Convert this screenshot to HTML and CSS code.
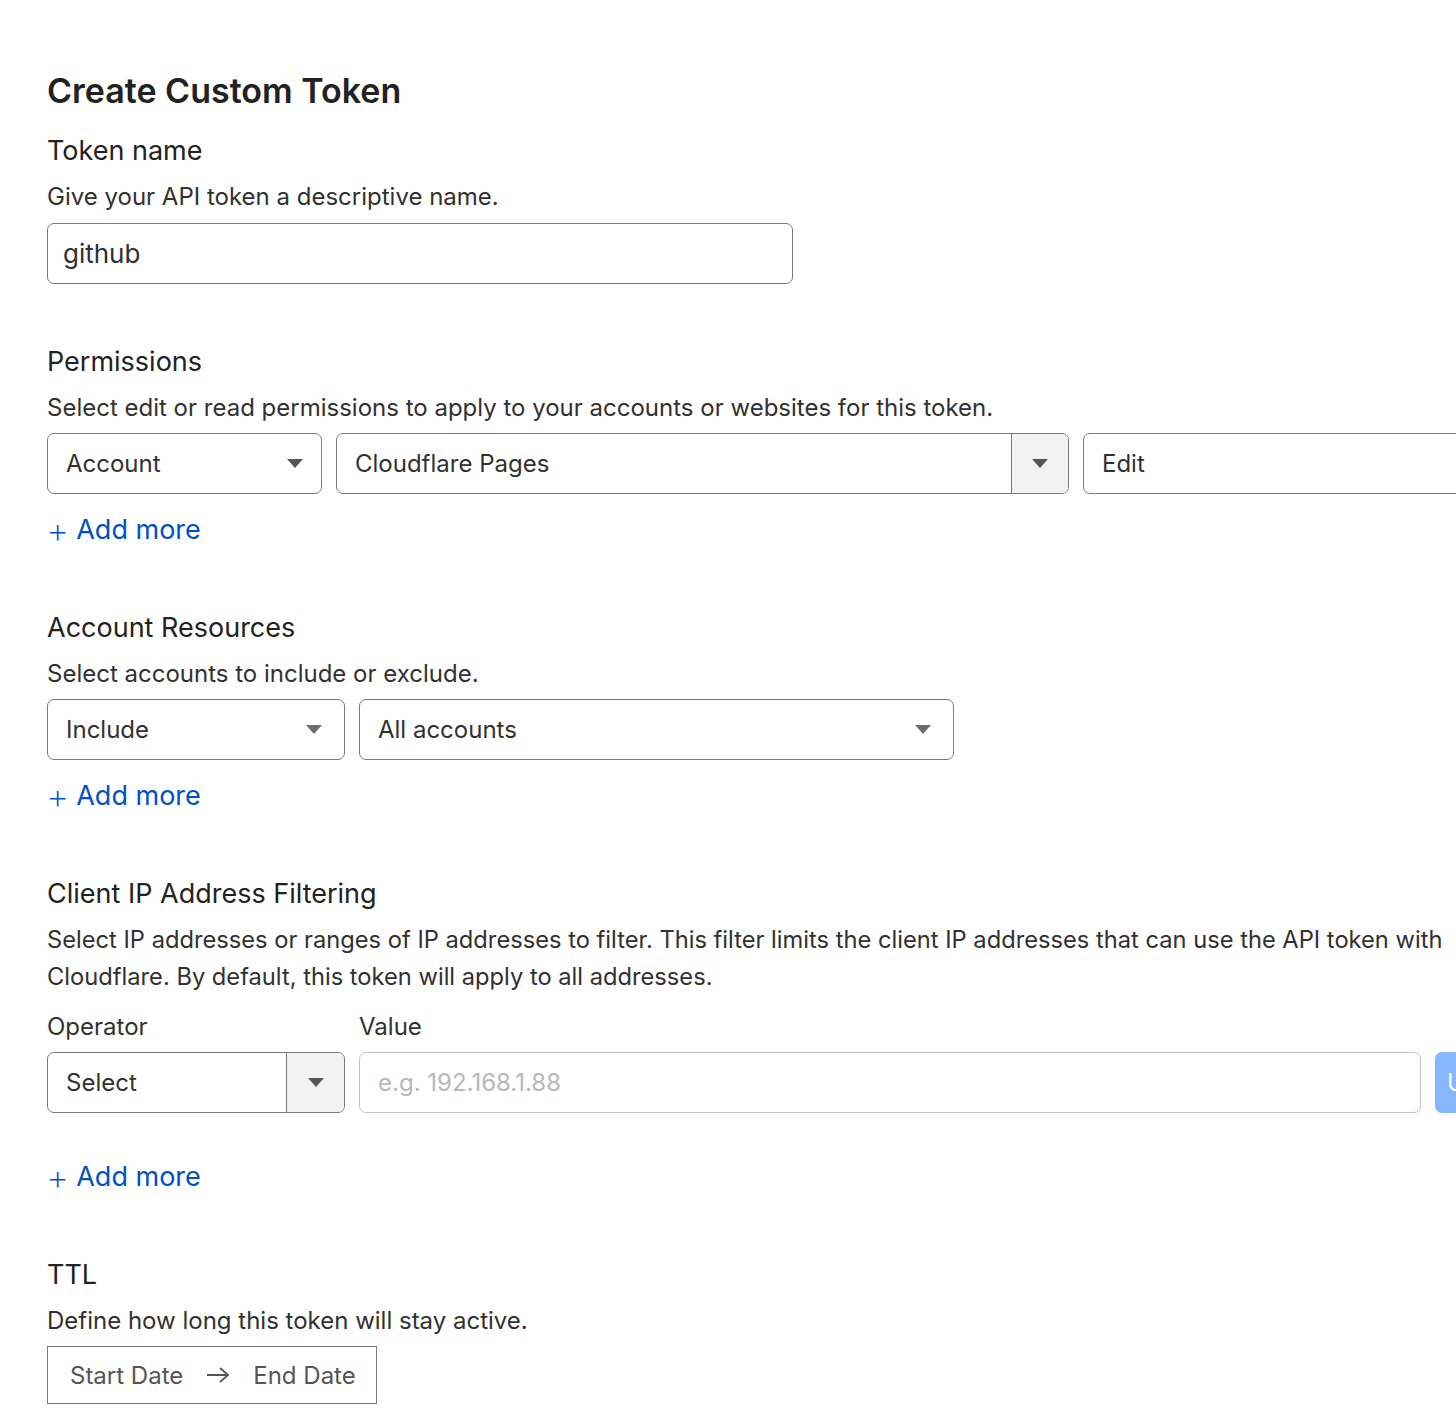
FILE: index.html
```html
<!DOCTYPE html>
<html lang="en">
<head>
  <meta charset="UTF-8">
  <meta name="viewport" content="width=device-width, initial-scale=1.0">
  <title>Create Custom Token</title>
  <link rel="stylesheet" href="styles.css">
</head>
<body>

<main class="token-form">
  <h1>Create Custom Token</h1>

  <section class="block first">
    <h2>Token name</h2>
    <p class="desc">Give your API token a descriptive name.</p>
    <div class="field name-field">github</div>
  </section>

  <section class="block">
    <h2>Permissions</h2>
    <p class="desc">Select edit or read permissions to apply to your accounts or websites for this token.</p>
    <div class="row perm-row">
      <div class="field select">Account <span class="caret"></span></div>
      <div class="field combo">
        <span class="combo-text">Cloudflare Pages</span>
        <span class="combo-btn"><span class="caret"></span></span>
      </div>
      <div class="field select">Edit</div>
    </div>
    <a class="add-more"><span class="plus">+</span> Add more</a>
  </section>

  <section class="block">
    <h2>Account Resources</h2>
    <p class="desc">Select accounts to include or exclude.</p>
    <div class="row res-row">
      <div class="field select">Include <span class="caret light"></span></div>
      <div class="field select">All accounts <span class="caret light"></span></div>
    </div>
    <a class="add-more"><span class="plus">+</span> Add more</a>
  </section>

  <section class="block">
    <h2>Client IP Address Filtering</h2>
    <p class="desc wide">Select IP addresses or ranges of IP addresses to filter. This filter limits the client IP addresses that can use the API token with Cloudflare. By default, this token will apply to all addresses.</p>
    <div class="row ip-labels">
      <span>Operator</span>
      <span>Value</span>
    </div>
    <div class="row ip-row">
      <div class="field combo">
        <span class="combo-text">Select</span>
        <span class="combo-btn"><span class="caret"></span></span>
      </div>
      <div class="field placeholder">e.g. 192.168.1.88</div>
      <button class="use-btn">Use my IP</button>
    </div>
    <a class="add-more spaced"><span class="plus">+</span> Add more</a>
  </section>

  <section class="block">
    <h2>TTL</h2>
    <p class="desc">Define how long this token will stay active.</p>
    <div class="date-range">
      <span>Start Date</span>
      <svg class="arrow" width="26" height="18" viewBox="0 0 26 18">
        <path d="M2 9h21M15 2l8 7-8 7" fill="none" stroke="#555" stroke-width="1.8"/>
      </svg>
      <span>End Date</span>
    </div>
  </section>
</main>

</body>
</html>
```

FILE: styles.css
```css
* {
  margin: 0;
  padding: 0;
  box-sizing: border-box;
}
body {
  background: #fff;
  color: #313131;
  font-family: Inter, "Noto Sans", sans-serif;
  overflow: hidden;
}
.token-form {
  padding: 71px 0 0 47px;
  width: 1600px;
}
h1 {
  font-size: 34px;
  line-height: 40px;
  font-weight: 600;
  color: #222;
  margin-bottom: 22px;
}
.block {
  margin-bottom: 62px;
}
.block.first {
  margin-bottom: 60px;
}
h2 {
  font-size: 27px;
  line-height: 36px;
  font-weight: 400;
  color: #222;
  margin-bottom: 9px;
}
.desc {
  font-size: 24px;
  line-height: 37px;
  margin-bottom: 7px;
}
.desc.wide {
  width: 1405px;
  font-size: 23.7px;
  margin-bottom: 14px;
}
.field {
  height: 61px;
  border: 1px solid #7a7a7a;
  border-radius: 7px;
  font-size: 24px;
  display: flex;
  align-items: center;
  padding: 0 18px;
  background: #fff;
}
.name-field {
  width: 746px;
  margin-top: 8px;
  padding-left: 15px;
  font-size: 26px;
}
.row {
  display: flex;
  gap: 14px;
}
.perm-row .field:nth-child(1) {
  width: 275px;
}
.perm-row .field:nth-child(2) {
  width: 733px;
}
.perm-row .field:nth-child(3) {
  width: 420px;
}
.res-row .field:nth-child(1) {
  width: 298px;
}
.res-row .field:nth-child(2) {
  width: 595px;
}
.select {
  justify-content: space-between;
}
.caret {
  width: 0;
  height: 0;
  border-left: 8px solid transparent;
  border-right: 8px solid transparent;
  border-top: 9px solid #555;
}
.caret.light {
  border-top-color: #6c6c6c;
  margin-right: 4px;
}
.combo {
  padding: 0;
  overflow: hidden;
}
.combo-text {
  flex: 1;
  padding-left: 18px;
}
.combo-btn {
  width: 57px;
  height: 100%;
  background: #f2f2f2;
  border-left: 1px solid #7a7a7a;
  display: flex;
  align-items: center;
  justify-content: center;
}
.add-more {
  display: inline-flex;
  align-items: center;
  gap: 7px;
  margin-top: 18px;
  font-size: 27px;
  line-height: 36px;
  color: #0051c3;
}
.add-more.spaced {
  margin-top: 46px;
}
.plus {
  font-size: 36px;
  font-weight: 200;
  line-height: 36px;
  margin-left: -1px;
}
.ip-labels {
  font-size: 24px;
  line-height: 36px;
  margin-bottom: 7px;
}
.ip-labels span:first-child {
  width: 298px;
}
.ip-row .combo {
  width: 298px;
}
.ip-row .combo-btn {
  width: 58px;
}
.placeholder {
  width: 1062px;
  color: #b8b8b8;
  border-color: #c4c4c4;
}
.use-btn {
  height: 61px;
  width: 140px;
  border: none;
  border-radius: 7px;
  background: #86b7ff;
  color: #fff;
  font-family: inherit;
  font-size: 24px;
  text-align: left;
  padding-left: 12px;
}
.date-range {
  display: inline-flex;
  align-items: center;
  gap: 22px;
  height: 58px;
  border: 1px solid #7a7a7a;
  padding: 0 20px 0 22px;
  font-size: 24px;
  color: #555;
  white-space: nowrap;
}
```
